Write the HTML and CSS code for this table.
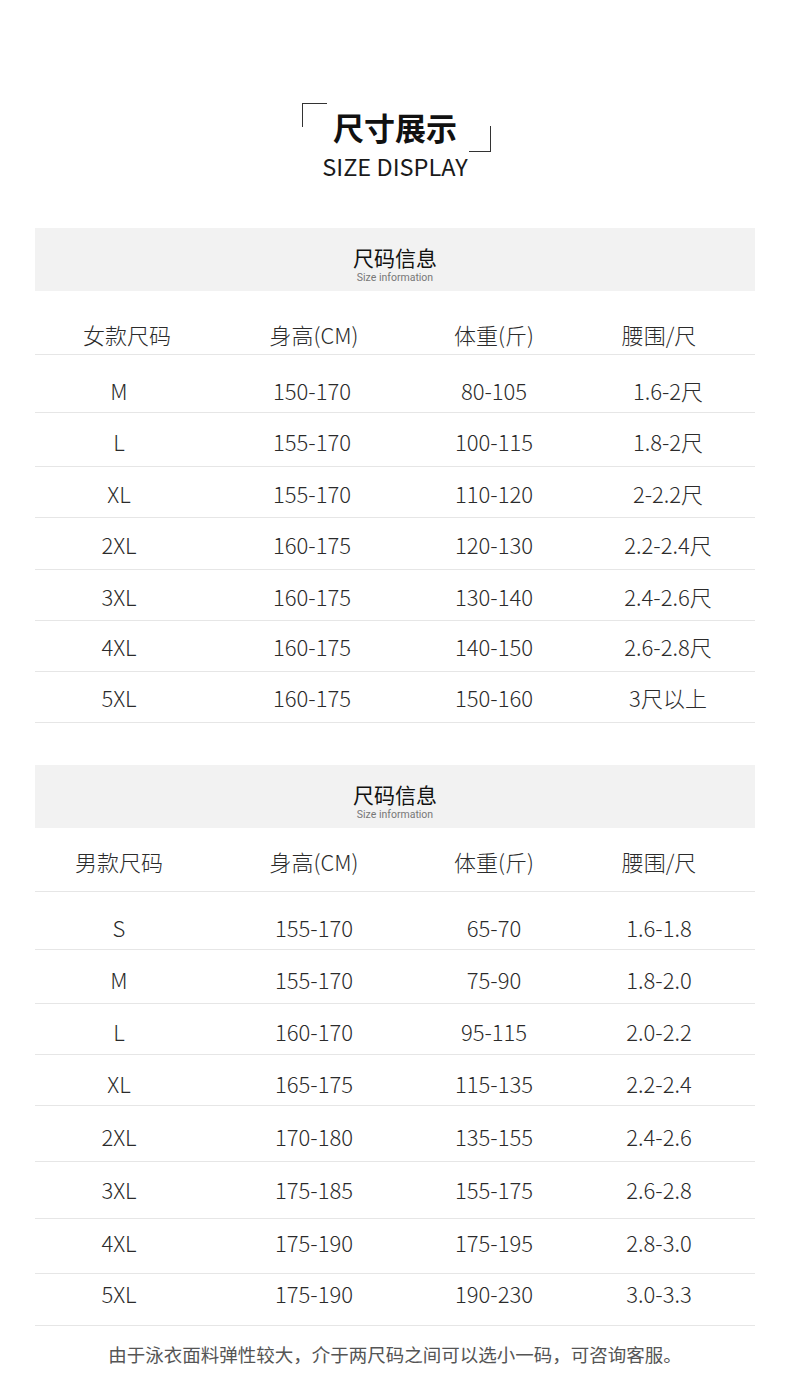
FILE: index.html
```html
<!DOCTYPE html>
<html lang="zh-CN">
<head>
<meta charset="utf-8">
<title>尺寸展示</title>
<link rel="stylesheet" href="styles.css">
</head>
<body>
<div class="page">
  <header class="title">
    <div class="title-cn"><span class="bracketed">尺寸展示</span></div>
    <div class="title-en">SIZE DISPLAY</div>
  </header>

  <section class="size-table t1">
    <div class="banner">
      <div class="banner-cn">尺码信息</div>
      <div class="banner-en">Size information</div>
    </div>
    <div class="row head"><div class="c1">女款尺码</div><div class="c2">身高(CM)</div><div class="c3">体重(斤)</div><div class="c4">腰围/尺</div></div>
    <div class="body">
      <div class="row"><div class="c1">M</div><div class="c2">150-170</div><div class="c3">80-105</div><div class="c4">1.6-2尺</div></div>
      <div class="row"><div class="c1">L</div><div class="c2">155-170</div><div class="c3">100-115</div><div class="c4">1.8-2尺</div></div>
      <div class="row"><div class="c1">XL</div><div class="c2">155-170</div><div class="c3">110-120</div><div class="c4">2-2.2尺</div></div>
      <div class="row"><div class="c1">2XL</div><div class="c2">160-175</div><div class="c3">120-130</div><div class="c4">2.2-2.4尺</div></div>
      <div class="row"><div class="c1">3XL</div><div class="c2">160-175</div><div class="c3">130-140</div><div class="c4">2.4-2.6尺</div></div>
      <div class="row"><div class="c1">4XL</div><div class="c2">160-175</div><div class="c3">140-150</div><div class="c4">2.6-2.8尺</div></div>
      <div class="row"><div class="c1">5XL</div><div class="c2">160-175</div><div class="c3">150-160</div><div class="c4">3尺以上</div></div>
    </div>
  </section>

  <section class="size-table t2">
    <div class="banner">
      <div class="banner-cn">尺码信息</div>
      <div class="banner-en">Size information</div>
    </div>
    <div class="row head"><div class="c1">男款尺码</div><div class="c2">身高(CM)</div><div class="c3">体重(斤)</div><div class="c4">腰围/尺</div></div>
    <div class="body">
      <div class="row"><div class="c1">S</div><div class="c2">155-170</div><div class="c3">65-70</div><div class="c4">1.6-1.8</div></div>
      <div class="row"><div class="c1">M</div><div class="c2">155-170</div><div class="c3">75-90</div><div class="c4">1.8-2.0</div></div>
      <div class="row"><div class="c1">L</div><div class="c2">160-170</div><div class="c3">95-115</div><div class="c4">2.0-2.2</div></div>
      <div class="row"><div class="c1">XL</div><div class="c2">165-175</div><div class="c3">115-135</div><div class="c4">2.2-2.4</div></div>
      <div class="row"><div class="c1">2XL</div><div class="c2">170-180</div><div class="c3">135-155</div><div class="c4">2.4-2.6</div></div>
      <div class="row"><div class="c1">3XL</div><div class="c2">175-185</div><div class="c3">155-175</div><div class="c4">2.6-2.8</div></div>
      <div class="row"><div class="c1">4XL</div><div class="c2">175-190</div><div class="c3">175-195</div><div class="c4">2.8-3.0</div></div>
      <div class="row"><div class="c1">5XL</div><div class="c2">175-190</div><div class="c3">190-230</div><div class="c4">3.0-3.3</div></div>
    </div>
  </section>

  <p class="note">由于泳衣面料弹性较大，介于两尺码之间可以选小一码，可咨询客服。</p>
</div>
</body>
</html>
```

FILE: styles.css
```css
* { box-sizing: border-box; }

html, body {
  margin: 0;
  padding: 0;
  background: #ffffff;
}

body {
  font-family: "Noto Sans CJK SC", "Noto Sans", sans-serif;
  color: #2b2b2b;
}

.page {
  width: 790px;
  padding: 107px 35px 0;
}

/* ---------- title ---------- */
.title {
  display: flex;
  flex-direction: column;
  align-items: center;
}

.title-cn {
  font-size: 31px;
  font-weight: 700;
  line-height: 40px;
  color: #111;
}

.bracketed {
  position: relative;
  display: inline-block;
}

.bracketed::before,
.bracketed::after {
  content: "";
  position: absolute;
  border-color: #333;
  border-style: solid;
  border-width: 0;
}

.bracketed::before {
  left: -31px;
  top: -4px;
  width: 24px;
  height: 23px;
  border-left-width: 1.5px;
  border-top-width: 1.5px;
}

.bracketed::after {
  right: -34px;
  bottom: -5px;
  width: 21px;
  height: 25px;
  border-right-width: 1.5px;
  border-bottom-width: 1.5px;
}

.title-en {
  margin-top: 4px;
  font-size: 23.5px;
  line-height: 30px;
  color: #1a1a1a;
}

/* ---------- tables ---------- */
.size-table {
  margin-top: 47px;
}

.size-table.t2 {
  margin-top: 42px;
}

.banner {
  height: 63px;
  padding-top: 17px;
  background: #f2f2f2;
  text-align: center;
}

.banner-cn {
  font-size: 21px;
  line-height: 24px;
  color: #111;
}

.banner-en {
  margin-top: 3px;
  font-family: Roboto, "Liberation Sans", sans-serif;
  font-size: 10.5px;
  line-height: 12px;
  color: #777;
}

.row {
  display: grid;
  grid-template-columns: 168px 222px 138px 192px;
  align-items: start;
  height: 51px;
  padding-top: 11px;
  border-bottom: 1px solid #e6e6e6;
  font-size: 22px;
  font-weight: 300;
  line-height: 30px;
  text-align: center;
  white-space: nowrap;
}

.row.head {
  height: 64px;
  padding-top: 28px;
  font-size: 22px;
}

.t2 .row.head {
  padding-top: 18px;
}

.t1 .head .c1 { padding-left: 16px; }
.t1 .body .c2 { padding-right: 4px; }
.t1 .body .c4 { padding-left: 18px; }

/* women's table row rhythm */
.t1 .body .row:nth-child(1) { height: 58px; padding-top: 20px; }
.t1 .body .row:nth-child(2) { height: 54px; padding-top: 13px; }
.t1 .body .row:nth-child(3) { padding-top: 11px; }
.t1 .body .row:nth-child(4) { height: 52px; padding-top: 11px; }
.t1 .body .row:nth-child(6),
.t1 .body .row:nth-child(7) { padding-top: 10px; }

/* men's table row rhythm */
.t2 .body .row:nth-child(1) { height: 58px; padding-top: 20px; }
.t2 .body .row:nth-child(2) { height: 54px; padding-top: 14px; }
.t2 .body .row:nth-child(3) { height: 51px; padding-top: 12px; }
.t2 .body .row:nth-child(4) { height: 51px; padding-top: 13px; }
.t2 .body .row:nth-child(5) { height: 56px; padding-top: 15px; }
.t2 .body .row:nth-child(6) { height: 57px; padding-top: 12px; }
.t2 .body .row:nth-child(7) { height: 55px; padding-top: 8px; }
.t2 .body .row:nth-child(8) { height: 52px; padding-top: 4px; }

/* ---------- note ---------- */
.note {
  margin: 14px 0 0;
  font-size: 18.5px;
  line-height: 28px;
  color: #555;
  text-align: center;
}
```
